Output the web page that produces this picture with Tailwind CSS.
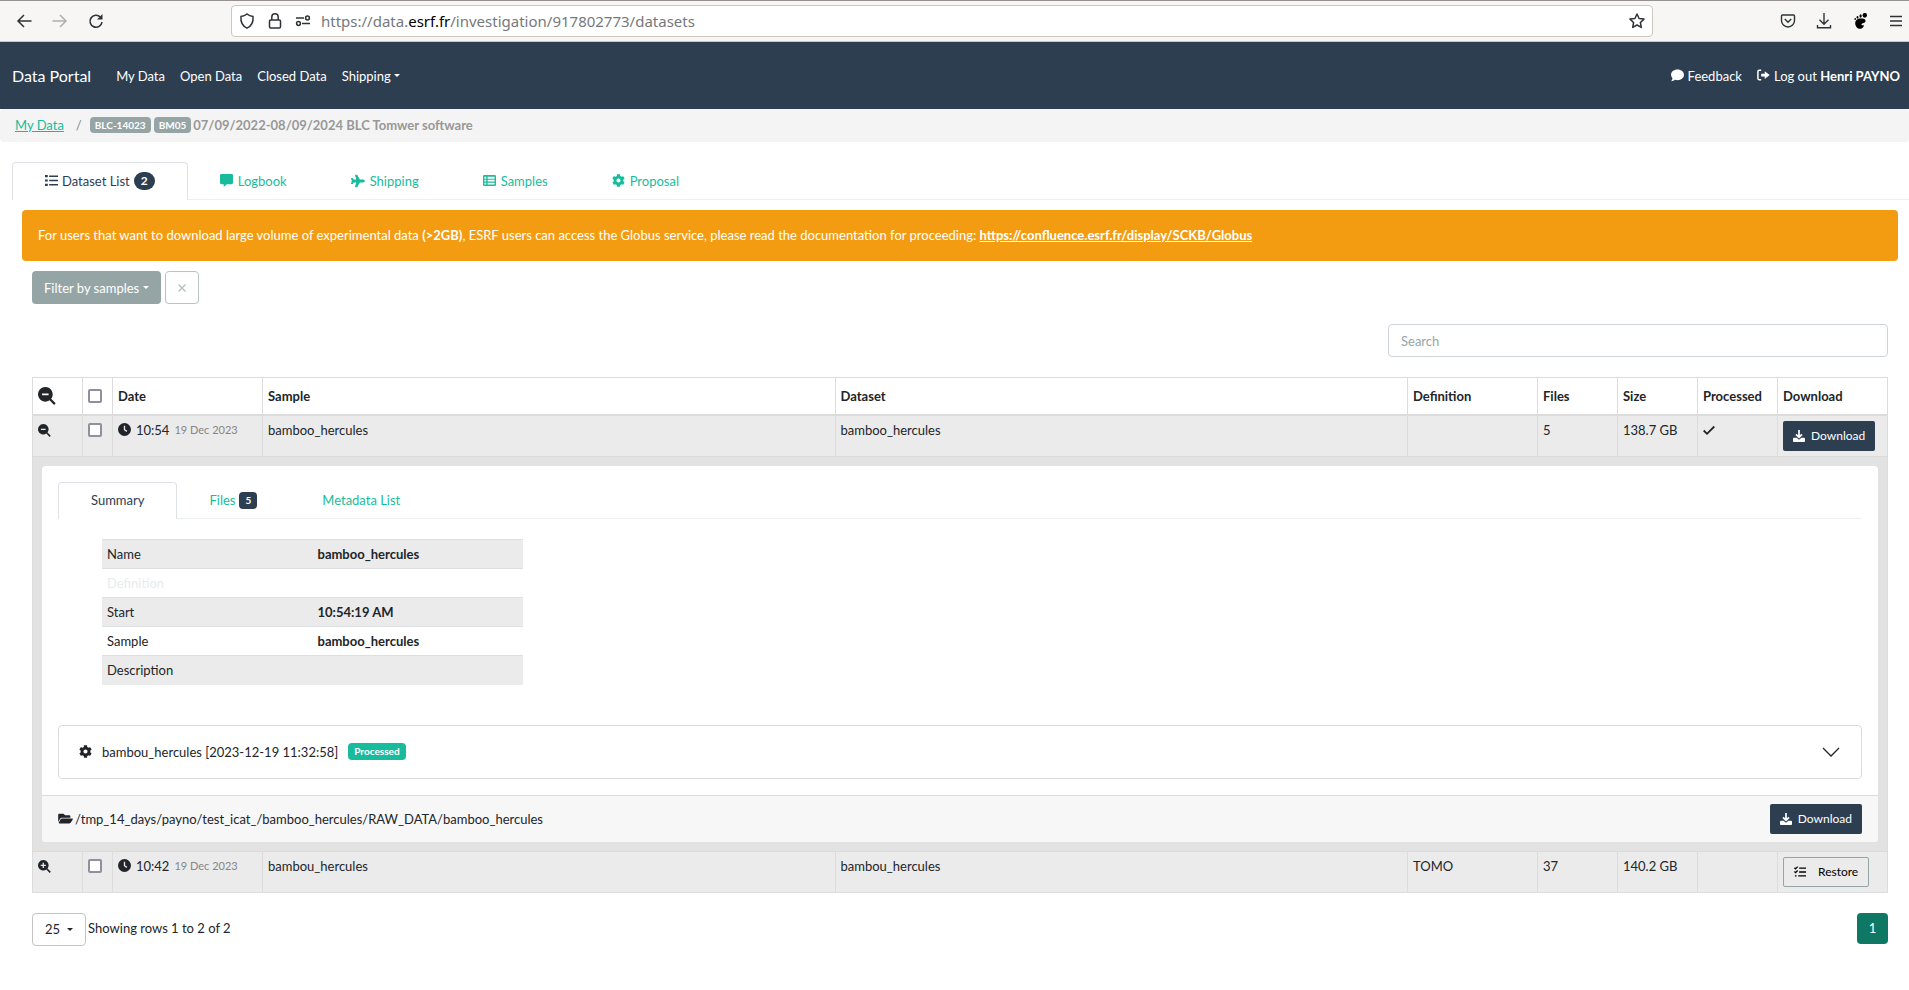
<!DOCTYPE html>
<html lang="en">
<head>
<meta charset="utf-8">
<title>Data Portal</title>
<script src="https://cdn.jsdelivr.net/npm/@tailwindcss/browser@4"></script>
</head>
<body class="min-h-screen bg-white font-['Lato',sans-serif] text-[13px] leading-5 text-[#212529]">

<svg class="hidden" aria-hidden="true">
  <symbol id="cog" viewBox="0 0 512 512"><path d="M487.4 315.7l-42.6-24.6c4.3-23.2 4.3-47 0-70.2l42.6-24.6c4.9-2.8 7.1-8.6 5.5-14-11.1-35.6-30-67.8-54.7-94.6-3.8-4.1-10-5.1-14.8-2.3L380.8 110c-17.9-15.4-38.5-27.3-60.8-35.1V25.8c0-5.6-3.9-10.5-9.4-11.7-36.7-8.2-74.3-7.8-109.2 0-5.5 1.2-9.4 6.1-9.4 11.7V75c-22.2 7.9-42.8 19.8-60.8 35.1L88.700 85.5c-4.9-2.8-11-1.900-14.8 2.3-24.7 26.7-43.6 58.9-54.7 94.6-1.700 5.4.6 11.2 5.5 14L67.3 221c-4.3 23.2-4.3 47 0 70.2l-42.6 24.6c-4.9 2.8-7.100 8.6-5.500 14 11.1 35.6 30 67.800 54.7 94.6 3.8 4.1 10 5.1 14.8 2.3l42.6-24.6c17.9 15.4 38.5 27.3 60.8 35.1v49.2c0 5.6 3.9 10.5 9.4 11.7 36.7 8.2 74.3 7.8 109.2 0 5.5-1.2 9.4-6.1 9.4-11.7v-49.2c22.2-7.900 42.8-19.8 60.8-35.1l42.6 24.6c4.9 2.8 11 1.9 14.8-2.3 24.7-26.7 43.6-58.9 54.7-94.6 1.5-5.5-.7-11.3-5.6-14.1zM256 336c-44.1 0-80-35.9-80-80s35.9-80 80-80 80 35.9 80 80-35.9 80-80 80z"/></symbol>
  <symbol id="download" viewBox="0 0 14 14"><path d="M7 0v7.500M3.500 5L7 8.500 10.500 5" fill="none" stroke="currentColor" stroke-width="2"/><path d="M1.300 9h2.900L7 11.500 9.800 9h2.900c.7 0 1.300.6 1.300 1.300v2.400c0 .7-.6 1.300-1.300 1.300H1.300C.6 14 0 13.400 0 12.700v-2.400C0 9.600.6 9 1.300 9z"/></symbol>
  <symbol id="clock" viewBox="0 0 14 14"><circle cx="7" cy="7" r="7"/><path d="M7 3v4.200l2.600 1.800" fill="none" stroke="#ebebeb" stroke-width="1.400"/></symbol>
  <symbol id="zoomout" viewBox="0 0 16 16"><path fill-rule="evenodd" d="M6.500 0a6.500 6.500 0 0 1 5.200 10.400l4 4-1.400 1.500-4-4.100A6.500 6.500 0 1 1 6.500 0zM3.600 5.700v1.600h5.800V5.700z"/></symbol>
  <symbol id="zoomin" viewBox="0 0 16 16"><path fill-rule="evenodd" d="M6.500 0a6.500 6.500 0 0 1 5.200 10.400l4.100 4-1.500 1.500-4-4.100A6.500 6.500 0 1 1 6.500 0zM5.700 3.300v2.400H3.300v1.600h2.400v2.400h1.600V7.300h2.400V5.700H7.300V3.300z"/></symbol>
</svg>

<header class="flex h-[42px] items-center border-t border-b border-t-[#959290] border-b-[#c9c5c1] bg-[#f7f6f5] pr-[5px] pl-4 text-[#2e3436]">
  <div class="flex w-[215px] items-center gap-5">
    <button class="flex size-4" aria-label="Back"><svg class="-m-1 size-6 shrink-0" viewBox="0 0 24 24" fill="none" stroke="currentColor" stroke-width="1.500"><path d="M19.500 12h-13M12 6l-6 6 6 6"/></svg></button>
    <button class="flex size-4 text-[#b0afae]" aria-label="Forward"><svg class="-m-1 size-6 shrink-0" viewBox="0 0 24 24" fill="none" stroke="currentColor" stroke-width="1.500"><path d="M4.500 12h13M12 6l6 6-6 6"/></svg></button>
    <button class="flex size-4" aria-label="Reload"><svg class="size-4" viewBox="0 0 16 16" fill="none" stroke="currentColor" stroke-width="1.600"><path d="M12.300 4A6 6 0 1 0 14 9"/><path d="M14.500 1v5.500H9z" fill="currentColor" stroke="none"/></svg></button>
  </div>
  <div class="flex h-8 w-[1422px] items-center rounded border border-[#cdc7c2] bg-white px-[7px]">
    <svg class="size-4" viewBox="0 0 16 16" fill="none" stroke="currentColor" stroke-width="1.500"><path d="M8 1c1.800 1.500 3.700 2.200 6 2.500.5 5-1.500 9.500-6 11.600C3.500 13 1.500 8.500 2 3.500 4.300 3.200 6.200 2.500 8 1z"/></svg>
    <svg class="ml-3 size-4" viewBox="0 0 16 16" fill="none" stroke="currentColor" stroke-width="1.500"><rect x="2.500" y="7" width="11" height="8" rx="1.200"/><path d="M4.800 7V4a3.200 3.200 0 0 1 6.400 0v3"/></svg>
    <svg class="ml-3 size-4" viewBox="0 0 16 16" fill="none" stroke="currentColor" stroke-width="1.500"><path d="M1 5h8M7 10.500h8"/><circle cx="12.500" cy="5" r="1.900"/><circle cx="3.500" cy="10.500" r="1.900"/></svg>
    <div role="textbox" aria-label="Address" class="ml-[10px] grow font-['Noto_Sans',sans-serif] text-[15px] text-[#75797b]">https://data.<span class="text-black">esrf.fr</span>/investigation/917802773/datasets</div>
    <svg class="size-4" viewBox="0 0 16 16" fill="none" stroke="currentColor" stroke-width="1.500" stroke-linejoin="round"><path d="M8 1l2.100 4.500 4.900.6-3.600 3.400.9 4.900L8 12l-4.300 2.400.9-4.900L1 6.100l4.900-.6z"/></svg>
  </div>
  <div class="ml-auto flex items-center gap-5">
    <svg class="size-4" viewBox="0 0 16 16" fill="none" stroke="currentColor" stroke-width="1.400"><path d="M2.500 2h11c.6 0 1 .4 1 1v4.500a6.500 6.500 0 0 1-13 0V3c0-.6.4-1 1-1zM4.800 6L8 9.200 11.200 6"/></svg>
    <svg class="size-4" viewBox="0 0 16 16" fill="none" stroke="currentColor" stroke-width="1.400"><path d="M8 0v11M3.500 6.700L8 11.200l4.500-4.500M1.500 12v2.800h13V12"/></svg>
    <svg class="size-4 text-black" viewBox="0 0 16 16" fill="currentColor"><path d="M8.500 5.500c3 0 5.500.5 5 3-.4 1.800-3.500 1.500-4 2.800-.4 1.200 1.700 1.400 2.300.5.300 2.200-1.500 4.200-4 4-2.800-.2-4.600-3-4.600-5.600 0-2.800 2.300-4.700 5.300-4.700z"/><ellipse cx="12.800" cy="2.300" rx="2.200" ry="2.400"/><ellipse cx="8.600" cy="3" rx="1.100" ry="1.700"/><ellipse cx="5.500" cy="4.300" rx=".9" ry="1.400"/><ellipse cx="3.200" cy="6" rx=".8" ry="1.100"/></svg>
    <svg class="size-4" viewBox="0 0 16 16" stroke="currentColor" stroke-width="1.400"><path d="M2 3.500h12M2 8h12M2 12.500h12"/></svg>
  </div>
</header>

<nav class="flex h-[67px] items-center bg-[#2c3e50] pr-[9px] pl-3 text-white">
  <a href="#" class="text-base">Data Portal</a>
  <a href="#" class="ml-[25px]">My Data</a>
  <a href="#" class="ml-[15px]">Open Data</a>
  <a href="#" class="ml-[15px]">Closed Data</a>
  <a href="#" class="ml-[15px] flex items-center gap-[3px]">Shipping<span class="border-x-[3px] border-t-[3px] border-x-transparent"></span></a>
  <a href="#" class="ml-auto flex items-center gap-1"><svg class="size-[13px]" viewBox="0 0 14 14" fill="currentColor"><path d="M7 .5c3.900 0 7 2.500 7 5.800s-3.100 5.800-7 5.800c-.9 0-1.800-.1-2.600-.4-1 .8-2.500 1.400-4.200 1.400C1 12.300 1.500 11.300 1.600 10A5.500 5.500 0 0 1 0 6.300C0 3 3.100.5 7 .5z"/></svg>Feedback</a>
  <a href="#" class="ml-[15px] flex items-center gap-1"><svg class="size-[13px]" viewBox="0 0 14 14" fill="currentColor"><path d="M4.500 1.300h-2c-.9 0-1.500.6-1.500 1.500v7.400c0 .9.600 1.500 1.500 1.500h2" fill="none" stroke="currentColor" stroke-width="1.600"/><path d="M4.500 5v3h3.800v2.700L13.700 6.500 8.300 2.300V5z"/></svg><span>Log out <b>Henri PAYNO</b></span></a>
</nav>

<div class="flex h-[33px] items-center rounded bg-[#f4f4f4] pb-[2px] pl-[15px] text-[#989898]">
  <a href="#" class="text-[#18bc9c] underline">My Data</a>
  <span class="ml-3 text-[#7b8a8b]">/</span>
  <span class="ml-2 rounded bg-[#95a5a6] px-[5px] text-[10px] leading-4 font-bold text-white">BLC-14023</span>
  <span class="mr-[2px] ml-[3px] rounded bg-[#95a5a6] px-[5px] text-[10px] leading-4 font-bold text-white">BM05</span>
  <b>07/09/2022-08/09/2024 BLC Tomwer software</b>
</div>

<main class="pt-5">
  <div role="tablist" class="ml-3 flex h-[38px] border-b border-[#ecf0f1] text-[#18bc9c]">
    <button role="tab" aria-selected="true" class="-mb-px flex items-center gap-1 rounded-t border border-b-0 border-[#dee2e6] bg-white px-8 pb-[2px] text-[#2c3e50]"><svg class="size-[13px]" viewBox="0 0 14 14" fill="currentColor"><path d="M0 1h3v2.500H0zM0 5.800h3v2.400H0zM0 10.500h3V13H0zM4.500 1.500H14v1.600H4.500zM4.500 6.200H14v1.600H4.500zM4.500 10.900H14v1.600H4.500z"/></svg>Dataset List<span class="rounded-full bg-[#2c3e50] px-[7px] text-xs leading-[18px] font-bold text-white">2</span></button>
    <button role="tab" class="flex items-center gap-[5px] px-8"><svg class="size-[13px]" viewBox="0 0 14 14" fill="currentColor"><path d="M1.500 0h11c.8 0 1.500.6 1.500 1.500v8c0 .9-.7 1.500-1.500 1.500H7.200L4 14v-3H1.500C.7 11 0 10.400 0 9.500v-8C0 .6.700 0 1.500 0z"/></svg>Logbook</button>
    <button role="tab" class="flex items-center gap-[5px] px-8"><svg class="size-[14px]" viewBox="0 0 576 512" fill="currentColor"><path d="M480 192H365.710L260.610 8.060A16.014 16.014 0 0 0 246.710 0h-65.500c-10.630 0-18.300 10.170-15.380 20.390L214.860 192H112l-43.200-57.600c-3.020-4.030-7.770-6.400-12.800-6.400H16.010C5.600 128-2.040 137.780.490 147.880L32 256 .490 364.120C-2.040 374.220 5.600 384 16.010 384H56c5.040 0 9.780-2.370 12.800-6.400L112 320h102.860l-49.030 171.600c-2.920 10.220 4.750 20.400 15.380 20.400h65.500c5.740 0 11.040-3.080 13.890-8.060L365.710 320H480c35.350 0 96-28.650 96-64s-60.650-64-96-64z"/></svg>Shipping</button>
    <button role="tab" class="flex items-center gap-[5px] px-8"><svg class="size-[13px]" viewBox="0 0 14 14" fill="currentColor"><path fill-rule="evenodd" d="M1.500 1h11c.8 0 1.500.6 1.500 1.500v9c0 .9-.7 1.500-1.500 1.500h-11C.7 13 0 12.400 0 11.500v-9C0 1.600.7 1 1.500 1zM1.500 3v2h2V3zM5 3v2h7.500V3zM1.500 6.200v1.800h2V6.200zM5 6.200v1.800h7.500V6.200zM1.500 9.300v2h2v-2zM5 9.300v2h7.500v-2z"/></svg>Samples</button>
    <button role="tab" class="flex items-center gap-[5px] px-8"><svg class="size-[13px]" fill="currentColor"><use href="#cog"/></svg>Proposal</button>
  </div>

  <div class="mt-[10px] mr-[11px] ml-[22px] rounded bg-[#f39c12] px-4 py-[15px] leading-[21px] text-white">For users that want to download large volume of experimental data <b>(&gt;2GB)</b>, ESRF users can access the Globus service, please read the documentation for proceeding: <a href="#" class="font-bold underline">https://confluence.esrf.fr/display/SCKB/Globus</a></div>

  <div class="mr-[21px] ml-8">
    <div class="mt-[10px] flex gap-1">
      <button class="flex h-[33px] items-center gap-1 rounded bg-[#95a5a6] px-3 text-white">Filter by samples<span class="border-x-[3px] border-t-[3px] border-x-transparent"></span></button>
      <button aria-label="Clear filter" class="flex h-[33px] w-[34px] items-center justify-center rounded border border-[#b8c3c3] text-[#b8c3c3]"><svg class="size-2" viewBox="0 0 8 8" stroke="currentColor" stroke-width="1.500"><path d="M.5.5l7 7M7.500.5l-7 7"/></svg></button>
    </div>
    <div class="mt-5 flex justify-end">
      <input aria-label="Search" placeholder="Search" class="h-[33px] w-[500px] rounded border border-[#ced4da] px-3 placeholder:text-[#95a5a6]">
    </div>

    <table class="mt-5 w-full table-fixed border-collapse border border-[#dcdcdc]">
      <colgroup><col class="w-[50px]"><col class="w-[30px]"><col class="w-[150px]"><col><col><col class="w-[130px]"><col class="w-[80px]"><col class="w-[80px]"><col class="w-[80px]"><col class="w-[110px]"></colgroup>
      <thead>
        <tr class="h-[37px] border-b-2 border-[#dcdcdc] text-left *:border-x *:border-[#dcdcdc] *:px-[5px]">
          <th><button class="flex" aria-label="Collapse all"><svg class="size-[18px]" fill="currentColor"><use href="#zoomout"/></svg></button></th>
          <th><input type="checkbox" aria-label="Select all" class="block size-[14px] appearance-none rounded-xs border-2 border-[#8f8f9d] bg-white"></th>
          <th>Date</th><th>Sample</th><th>Dataset</th><th>Definition</th><th>Files</th><th>Size</th><th>Processed</th><th>Download</th>
        </tr>
      </thead>
      <tbody>
        <tr class="h-[42px] bg-[#ebebeb] align-top *:border *:border-t-0 *:border-[#dcdcdc] *:px-[5px] *:pt-1">
          <td><button class="mt-1 flex" aria-label="Collapse row"><svg class="size-[13px]" fill="currentColor"><use href="#zoomout"/></svg></button></td>
          <td><input type="checkbox" aria-label="Select row" class="mt-[3px] block size-[14px] appearance-none rounded-xs border-2 border-[#8f8f9d] bg-white"></td>
          <td><div class="flex items-center"><svg class="mr-[5px] size-[13px]" fill="currentColor"><use href="#clock"/></svg>10:54<span class="ml-[5px] text-[11px] text-[#868686]">19 Dec 2023</span></div></td>
          <td>bamboo_hercules</td><td>bamboo_hercules</td><td></td><td>5</td><td>138.7 GB</td>
          <td><svg class="mt-1 size-3" viewBox="0 0 12 12" fill="none" stroke="currentColor" stroke-width="1.800" role="img" aria-label="Yes"><path d="M.7 6.500L4 9.800 11.300 2.500"/></svg></td>
          <td><button class="mt-px flex h-[30px] items-center gap-[6px] rounded-xs bg-[#2c3e50] px-[10px] text-xs text-white"><svg class="size-3" fill="currentColor"><use href="#download"/></svg>Download</button></td>
        </tr>
        <tr class="bg-[#e2e2e2]">
          <td colspan="10" class="border-b border-[#dcdcdc] p-[9px]">
            <section class="overflow-hidden rounded bg-white">
              <div class="p-4">
                <div role="tablist" class="flex h-[37px] border-b border-[#ecf0f1] text-[#18bc9c]">
                  <button role="tab" aria-selected="true" class="-mb-px rounded-t border border-b-0 border-[#dee2e6] bg-white px-8 pb-[2px] text-[#2c3e50]">Summary</button>
                  <button role="tab" class="flex items-center gap-1 px-8">Files<span class="rounded bg-[#2c3e50] px-[6px] text-[10px] leading-[17px] font-bold text-white">5</span></button>
                  <button role="tab" class="px-[33px]">Metadata List</button>
                </div>
                <table class="mt-5 ml-11 w-[421px] table-fixed border-collapse *:*:*:px-[5px] *:*:*:py-1">
                  <tbody class="*:h-[29px] *:border-t *:border-[#dcdfe2] *:text-left *:odd:bg-[#ebebeb]">
                    <tr><td>Name</td><th>bamboo_hercules</th></tr>
                    <tr><td class="text-[#e9ebec]">Definition</td><th></th></tr>
                    <tr><td>Start</td><th>10:54:19 AM</th></tr>
                    <tr><td>Sample</td><th>bamboo_hercules</th></tr>
                    <tr><td>Description</td><th></th></tr>
                  </tbody>
                </table>
                <button class="mt-10 flex h-[54px] w-full items-center rounded border border-[#dcdcdc] px-5 text-left"><svg class="mr-[10px] size-[13px]" fill="currentColor"><use href="#cog"/></svg>bambou_hercules [2023-12-19 11:32:58]<span class="ml-[10px] rounded bg-[#18bc9c] px-[6px] text-[10px] leading-[17px] font-bold text-white">Processed</span><svg class="ml-auto size-5" viewBox="0 0 20 20" fill="none" stroke="currentColor" stroke-width="1.300"><path d="M2 6l8 8 8-8"/></svg></button>
              </div>
              <footer class="flex h-[47px] items-center border-t border-[#dcdcdc] bg-[#f7f7f7] px-4">
                <svg class="mr-[2px] h-[13px] w-[15px]" viewBox="0 0 576 512" fill="currentColor"><path d="M572.694 292.093L500.270 416.248A63.997 63.997 0 0 1 444.989 448H45.025c-18.523 0-30.064-20.093-20.731-36.093l72.424-124.155A64 64 0 0 1 152 256h399.964c18.523 0 30.064 20.093 20.730 36.093zM152 224h328v-48c0-26.510-21.490-48-48-48H272l-64-64H48C21.490 64 0 85.490 0 112v278.046l69.077-118.418C86.214 242.250 117.989 224 152 224z"/></svg>/tmp_14_days/payno/test_icat_/bamboo_hercules/RAW_DATA/bamboo_hercules
                <button class="ml-auto flex h-[30px] items-center gap-[6px] rounded-xs bg-[#2c3e50] px-[10px] text-xs text-white"><svg class="size-3" fill="currentColor"><use href="#download"/></svg>Download</button>
              </footer>
            </section>
          </td>
        </tr>
        <tr class="h-[41px] bg-[#ebebeb] align-top *:border *:border-t-0 *:border-[#dcdcdc] *:px-[5px] *:pt-1">
          <td><button class="mt-1 flex" aria-label="Expand row"><svg class="size-[13px]" fill="currentColor"><use href="#zoomin"/></svg></button></td>
          <td><input type="checkbox" aria-label="Select row" class="mt-[3px] block size-[14px] appearance-none rounded-xs border-2 border-[#8f8f9d] bg-white"></td>
          <td><div class="flex items-center"><svg class="mr-[5px] size-[13px]" fill="currentColor"><use href="#clock"/></svg>10:42<span class="ml-[5px] text-[11px] text-[#868686]">19 Dec 2023</span></div></td>
          <td>bambou_hercules</td><td>bambou_hercules</td><td>TOMO</td><td>37</td><td>140.2 GB</td><td></td>
          <td><button class="mt-px flex h-[30px] items-center gap-3 rounded-xs border border-[#95a5a6] px-[10px] text-xs text-black"><svg class="size-3" viewBox="0 0 14 14" fill="none" stroke="currentColor" stroke-width="1.500"><path d="M6 2.500h8M6 7h8M5 11.500h9M.5 2l1.300 1.300L4.300.7M.5 6.500l1.300 1.300 2.500-2.600M1 11.500h2"/></svg>Restore</button></td>
        </tr>
      </tbody>
    </table>

    <div class="mt-5 flex items-start gap-[2px]">
      <button class="flex h-[33px] items-center gap-[7px] rounded border border-[#c4c4c4] px-3">25<span class="border-x-[3px] border-t-[3px] border-x-transparent"></span></button>
      <span class="leading-[31px]">Showing rows 1 to 2 of 2</span>
      <a href="#" class="ml-auto w-[31px] rounded bg-[#0f7864] text-center leading-[31px] text-white">1</a>
    </div>
  </div>
</main>
</body>
</html>
